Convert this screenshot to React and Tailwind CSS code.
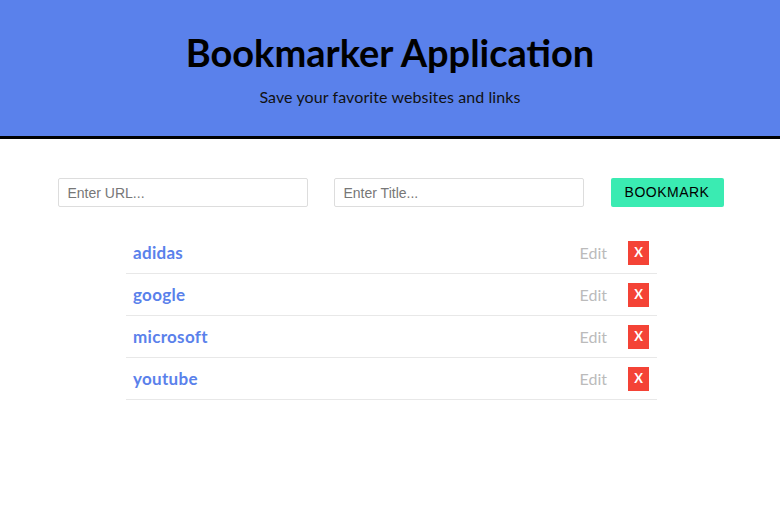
import { useState } from "react";

const INITIAL = [
    { id: 1, title: "adidas", url: "https://www.adidas.com" },
    { id: 2, title: "google", url: "https://www.google.com" },
    { id: 3, title: "microsoft", url: "https://www.microsoft.com" },
    { id: 4, title: "youtube", url: "https://www.youtube.com" },
];

function App() {
    const [url, setUrl] = useState("");
    const [title, setTitle] = useState("");
    const [bookmarks, setBookmarks] = useState(INITIAL);

    const addBookmark = () => {
        if (!url.trim() || !title.trim()) return;
        setBookmarks([...bookmarks, { id: Date.now(), title, url }]);
        setUrl("");
        setTitle("");
    };

    return (
        <div className="min-h-screen bg-white font-['Lato',sans-serif]">
            {/* Header */}
            <header className="h-[139px] bg-[#5a81eb] border-b-[3px] border-black text-center pt-[28px]">
                <h1 className="text-[38px] leading-[48px] font-bold text-black">
                    Bookmarker Application
                </h1>
                <p className="mt-[11px] text-[16px] leading-[20px] text-[#111] tracking-[0.1px]">
                    Save your favorite websites and links
                </p>
            </header>

            {/* Form */}
            <div className="flex justify-center mt-[39px] pl-[1px] font-['Liberation_Sans',sans-serif]">
                <input
                    type="text"
                    value={url}
                    onChange={(e) => setUrl(e.target.value)}
                    placeholder="Enter URL..."
                    className="w-[250px] h-[29px] px-[9px] text-[14px] border border-[#ddd] rounded-[2px] placeholder:text-[#777] outline-none"
                />
                <input
                    type="text"
                    value={title}
                    onChange={(e) => setTitle(e.target.value)}
                    placeholder="Enter Title..."
                    className="w-[250px] h-[29px] ml-[26px] px-[9px] text-[14px] border border-[#ddd] rounded-[2px] placeholder:text-[#777] outline-none"
                />
                <button
                    onClick={addBookmark}
                    className="w-[113px] h-[29px] ml-[27px] bg-[#3aebb2] text-[14px] tracking-[0.5px] text-black rounded-[2px]"
                >
                    BOOKMARK
                </button>
            </div>

            {/* List */}
            <ul className="w-[531px] ml-[126px] mt-[25px]">
                {bookmarks.map((b) => (
                    <li
                        key={b.id}
                        className="h-[42px] flex items-center border-b border-[#e8e8e8] pl-[7px] pr-[8px]"
                    >
                        <a href={b.url} className="flex-1 text-[17px] font-bold text-[#5a81eb] tracking-[0.3px]">
                            {b.title}
                        </a>
                        <span className="text-[16px] text-[#bbb] mr-[21px]">Edit</span>
                        <button
                            onClick={() => setBookmarks(bookmarks.filter((x) => x.id !== b.id))}
                            className="w-[21px] h-[24px] bg-[#f44336] text-white text-[13px] font-bold flex items-center justify-center"
                        >
                            X
                        </button>
                    </li>
                ))}
            </ul>
        </div>
    );
}

export default App;
